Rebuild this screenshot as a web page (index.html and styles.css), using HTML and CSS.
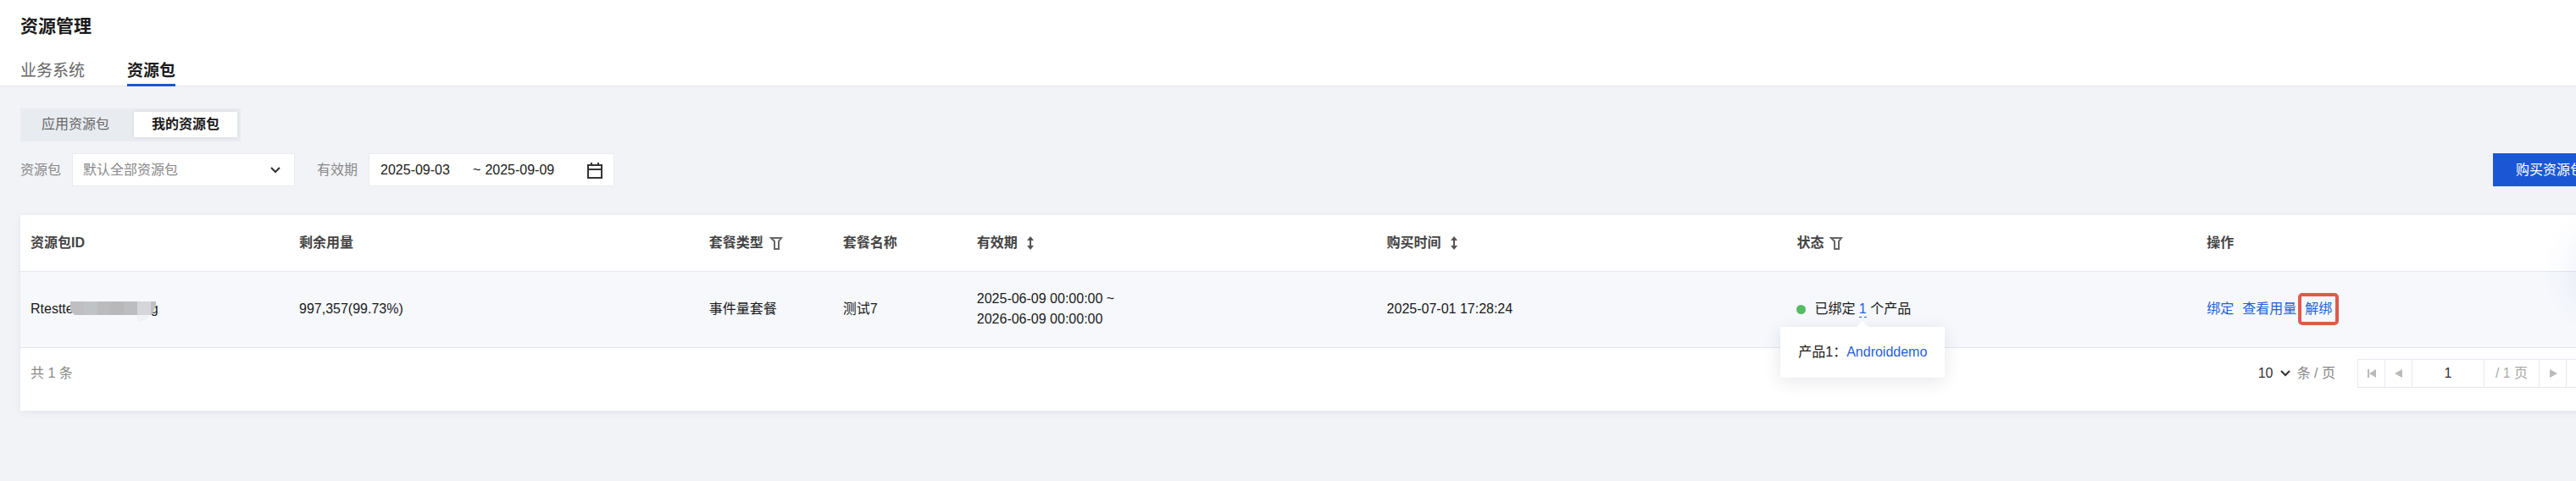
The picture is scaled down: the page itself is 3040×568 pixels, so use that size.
FILE: index.html
```
<!DOCTYPE html>
<html lang="zh-CN">
<head>
    <meta charset="UTF-8">
    <meta name="viewport" content="width=device-width, initial-scale=1.0">
    <title>资源管理</title>
    <link rel="stylesheet" href="styles.css">
</head>
<body>
    <header class="page-header">
        <h1>资源管理</h1>
        <nav class="tabs">
            <a href="#system">业务系统</a>
            <a href="#package" class="active">资源包</a>
        </nav>
    </header>

    <main class="content">
        <div class="segment">
            <button type="button">应用资源包</button>
            <button type="button" class="active">我的资源包</button>
        </div>

        <!-- Filters -->
        <div class="filters">
            <label for="package">资源包</label>
            <div class="select-box">
                <select id="package">
                    <option>默认全部资源包</option>
                </select>
                <svg class="chevron" width="12" height="8" viewBox="0 0 12 8"><path d="M1 1l5 5 5-5" /></svg>
            </div>
            <label for="start">有效期</label>
            <div class="date-box">
                <input id="start" class="start" type="text" value="2025-09-03">
                <span>~</span>
                <input class="end" type="text" value="2025-09-09" aria-label="结束日期">
                <button type="button" aria-label="选择日期">
                    <svg width="20" height="20" viewBox="0 0 20 20"><path d="M2 4h16v15H2zM2 9h16M6 1v3M14 1v3" /></svg>
                </button>
            </div>
            <button type="button" class="buy">购买资源包</button>
        </div>

        <!-- Package table -->
        <section class="card">
            <table>
                <colgroup>
                    <col class="col-id">
                    <col>
                    <col class="col-small">
                    <col class="col-small">
                    <col>
                    <col>
                    <col>
                    <col>
                </colgroup>
                <thead>
                    <tr>
                        <th>资源包ID</th>
                        <th>剩余用量</th>
                        <th><span class="head">套餐类型
                            <svg class="filter-icon" width="16" height="16" viewBox="0 0 16 16"><path d="M2 2h12l-3 4v9H6V6z" /></svg></span></th>
                        <th>套餐名称</th>
                        <th><span class="head sort">有效期
                            <svg class="sort-icon" width="8" height="16" viewBox="0 0 8 16"><path d="M4 0l4 5H5v6h3l-4 5-4-5h3V5H0z" /></svg></span></th>
                        <th><span class="head sort">购买时间
                            <svg class="sort-icon" width="8" height="16" viewBox="0 0 8 16"><path d="M4 0l4 5H5v6h3l-4 5-4-5h3V5H0z" /></svg></span></th>
                        <th><span class="head">状态
                            <svg class="filter-icon" width="16" height="16" viewBox="0 0 16 16"><path d="M2 2h12l-3 4v9H6V6z" /></svg></span></th>
                        <th>操作</th>
                    </tr>
                </thead>
                <tbody>
                    <tr>
                        <td>
                            <span class="package-id">Rtestte<svg class="mask" width="102" height="24" viewBox="0 0 102 24">
                                <path fill="#bfbfc1" d="M0 0h17v16H5L0 11z" />
                                <path fill="#bfc3c6" d="M16 0h16v16H16z" />
                                <path fill="#bbbbbd" d="M32 0h16v16H32z" />
                                <path fill="#b8b8ba" d="M47 0h16v16H47z" />
                                <path fill="#bdbdbf" d="M63 0h16v16H63z" />
                                <path fill="#d5d6d9" d="M79 0h17v16H79z" />
                                <path fill="#c0c0c2" d="M95 0h6v4l-3 9-3 3z" />
                                <path fill="#f1f2f5" d="M79 16h16q-5 6-16 8z" />
                            </svg>g</span>
                        </td>
                        <td>997,357(99.73%)</td>
                        <td>事件量套餐</td>
                        <td>测试7</td>
                        <td>2025-06-09 00:00:00 ~<br>2026-06-09 00:00:00</td>
                        <td>2025-07-01 17:28:24</td>
                        <td>
                            <div class="status">
                                <i class="dot"></i>
                                <span>已绑定 <span class="bound"><a href="#products">1</a>
                                    <span class="popover">产品1：<a href="#demo">Androiddemo</a></span>
                                </span> 个产品</span>
                            </div>
                        </td>
                        <td>
                            <div class="actions">
                                <a href="#bind">绑定</a>
                                <a href="#usage">查看用量</a>
                                <a href="#unbind" class="marked">解绑</a>
                            </div>
                        </td>
                    </tr>
                </tbody>
            </table>

            <footer class="card-footer">
                <span class="total">共 1 条</span>
                <label class="page-size">
                    <select>
                        <option>10</option>
                    </select>
                    <svg class="chevron" width="12" height="8" viewBox="0 0 12 8"><path d="M1 1l5 5 5-5" /></svg>
                    <span>条 / 页</span>
                </label>
                <div class="pager">
                    <button type="button" aria-label="首页"><svg width="10" height="10" viewBox="0 0 10 10"><path d="M0 0h2v10H0zM10 0v10L2 5z" /></svg></button>
                    <button type="button" aria-label="上一页"><svg width="10" height="10" viewBox="0 0 10 10"><path d="M9 0v10L0 5z" /></svg></button>
                    <input type="text" value="1" aria-label="页码">
                    <span class="pages">/ 1 页</span>
                    <button type="button" aria-label="下一页"><svg width="10" height="10" viewBox="0 0 10 10"><path d="M1 0v10l9-5z" /></svg></button>
                    <button type="button" aria-label="末页"><svg width="10" height="10" viewBox="0 0 10 10"><path d="M8 0h2v10H8zM0 0v10l8-5z" /></svg></button>
                </div>
            </footer>
        </section>
    </main>

    <!-- Floating help entry, docked past the right edge -->
    <div class="float-dock"></div>
</body>
</html>
```

FILE: styles.css
```
* {
    box-sizing: border-box;
}

body {
    margin: 0;
    min-height: 100vh;
    position: relative;
    overflow: hidden;
    background-color: #f2f3f7;
    color: #1a1a1a;
    font-family: "Liberation Sans", "Noto Sans CJK SC", sans-serif;
    font-size: 16px;
    line-height: 24px;
}

a {
    color: #2560d8;
    text-decoration: none;
}

button, input, select {
    font: inherit;
    color: inherit;
    margin: 0;
    padding: 0;
    border: none;
    background: none;
    outline: none;
    border-radius: 0;
}

button {
    cursor: pointer;
}

svg {
    flex: none;
}

/* Header */
.page-header {
    padding: 16px 24px 0;
    background-color: #fff;
    border-bottom: 1px solid #e5e7ed;
}

h1 {
    margin: 0;
    font-size: 21px;
    line-height: 30px;
}

.tabs {
    display: flex;
    gap: 50px;
    margin-top: 22px;
    font-size: 19px;
    line-height: 31px;
}

.tabs a {
    margin-bottom: -1px;
    border-bottom: 3px solid transparent;
    color: #666;
}

.tabs .active {
    border-color: #1b57d5;
    color: #1a1a1a;
    font-weight: bold;
}

.content {
    margin-right: -36px;
    padding: 26px 0 0 24px;
}

.segment {
    display: flex;
    width: fit-content;
    padding: 4px 4px 5px;
    background-color: #e8ebf0;
}

.segment button {
    padding: 3px 21px;
    color: #666;
}

.segment button:first-child {
    padding-right: 29px;
}

.segment .active {
    background-color: #fff;
    color: #1a1a1a;
    font-weight: bold;
    box-shadow: 0 0 4px rgba(60, 70, 100, 0.12);
}

/* Filters */
.filters {
    display: flex;
    align-items: center;
    margin-top: 14px;
    color: #888;
}

.chevron {
    fill: none;
    stroke: #333;
    stroke-width: 2;
}

.select-box {
    display: flex;
    align-items: center;
    width: 263px;
    height: 39px;
    margin: 0 26px 0 13px;
    padding-right: 16px;
    border: 1px solid #e9ebf0;
    background-color: #fff;
}

.select-box select {
    flex: 1;
    height: 36px;
    padding-left: 12px;
    appearance: none;
}

.date-box {
    display: flex;
    align-items: center;
    width: 290px;
    height: 39px;
    margin-left: 13px;
    padding: 0 12px 0 13px;
    border: 1px solid #e9ebf0;
    background-color: #fff;
    color: #1a1a1a;
}

.date-box .start {
    width: 109px;
}

.date-box .end {
    flex: 1;
    min-width: 0;
    margin-left: 5px;
}

.date-box button {
    display: flex;
}

.date-box svg {
    fill: none;
    stroke: #333;
    stroke-width: 2;
}

.buy {
    height: 39px;
    margin-left: auto;
    padding: 0 27px;
    background-color: #1b57d5;
    color: #fff;
}

/* Table */
.card {
    margin-top: 34px;
    background-color: #fff;
    box-shadow: 0 2px 8px rgba(50, 60, 90, 0.08);
}

table {
    width: 100%;
    border-collapse: collapse;
    table-layout: fixed;
}

.col-id {
    width: 317px;
}

.col-small {
    width: 158px;
}

th, td {
    padding: 0 12px;
    border-bottom: 1px solid #e3e6ee;
    text-align: left;
}

th {
    height: 66px;
    color: #444;
}

td {
    height: 90px;
    background-color: #f6f8fc;
}

.head {
    display: flex;
    align-items: center;
    gap: 7px;
}

.head.sort {
    gap: 11px;
}

.filter-icon {
    fill: none;
    stroke: #666;
    stroke-width: 2;
}

.sort-icon {
    fill: #555;
}

.package-id {
    display: flex;
    align-items: center;
}

.mask {
    position: relative;
    margin: 5px -7px 0 -4px;
}

.status {
    display: flex;
    align-items: center;
    gap: 10px;
}

.dot {
    width: 11px;
    height: 11px;
    border-radius: 50%;
    background-color: #55bb63;
}

.bound {
    display: inline-block;
    position: relative;
}

.bound > a {
    padding-bottom: 1px;
    border-bottom: 1px dashed #2560d8;
}

.popover {
    position: absolute;
    top: 33px;
    left: 50%;
    z-index: 1;
    padding: 18px 21px;
    background-color: #fff;
    box-shadow: 0 4px 20px rgba(40, 50, 70, 0.12);
    white-space: nowrap;
    transform: translateX(-50%);
}

.popover::before {
    content: '';
    position: absolute;
    top: -7px;
    left: 50%;
    margin-left: -7px;
    border: 7px solid transparent;
    border-top: none;
    border-bottom-color: #fff;
}

.actions {
    display: flex;
    align-items: center;
    gap: 10px;
}

.marked {
    margin: 0 -8px;
    padding: 3px 4px;
    border: 4px solid #e05a4b;
    border-radius: 5px;
}

/* Footer and paging */
.card-footer {
    display: flex;
    align-items: center;
    padding: 13px 14px 27px 12px;
    color: #888;
}

.page-size {
    display: flex;
    align-items: center;
    gap: 8px;
    margin: 0 26px 0 auto;
}

.page-size select {
    appearance: none;
    color: #333;
}

.pager {
    display: flex;
    height: 34px;
    border: 1px solid #e7e9f1;
}

.pager > * {
    border-right: 1px solid #e7e9f1;
}

.pager > :last-child {
    border-right: none;
}

.pager button {
    width: 32px;
}

.pager svg {
    fill: #bbb;
}

.pager input {
    width: 85px;
    color: #333;
    text-align: center;
}

.pages {
    width: 65px;
    color: #aaa;
    line-height: 32px;
    text-align: center;
}

.float-dock {
    position: absolute;
    top: 290px;
    right: -66px;
    width: 60px;
    height: 60px;
    border-radius: 50%;
    box-shadow: 0 0 50px rgba(50, 80, 190, 0.2);
}
```
